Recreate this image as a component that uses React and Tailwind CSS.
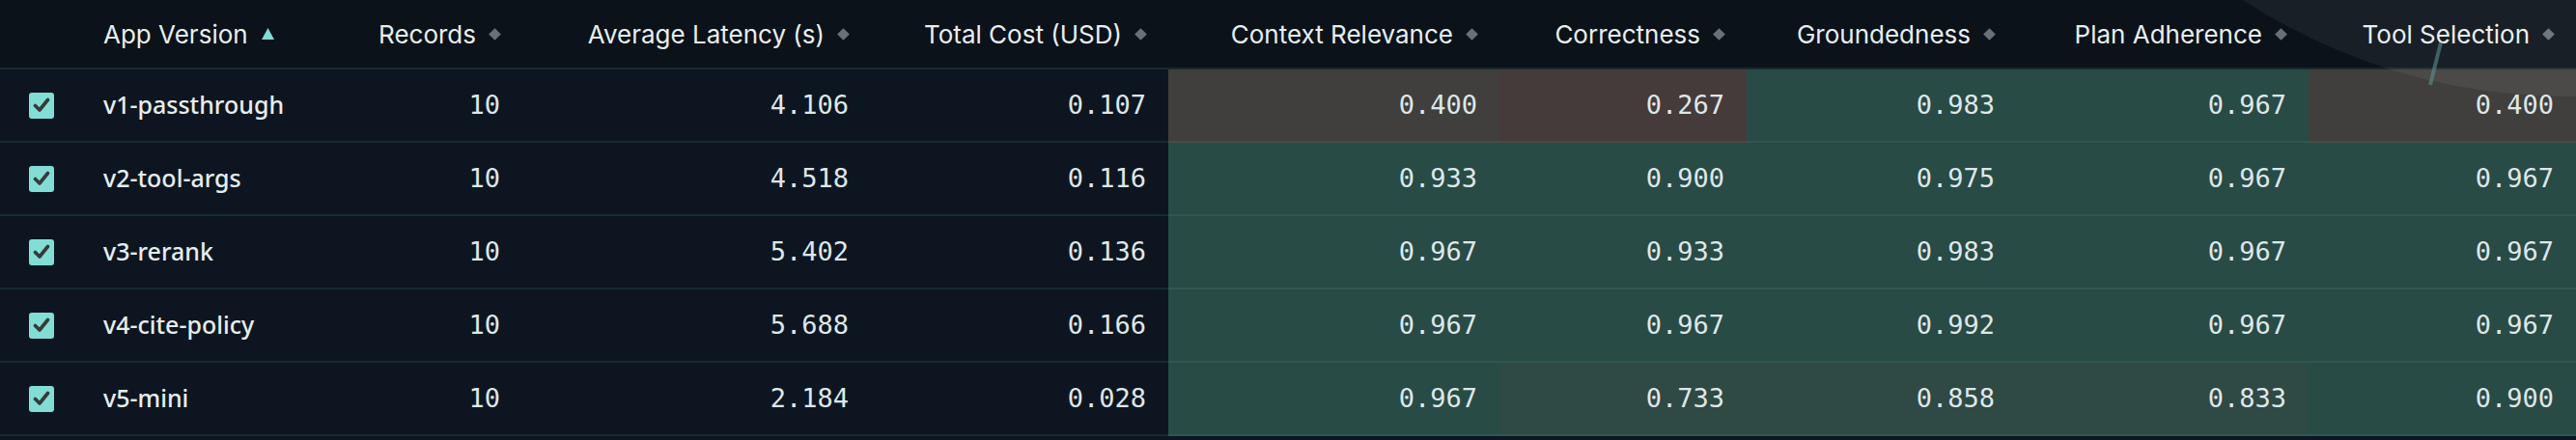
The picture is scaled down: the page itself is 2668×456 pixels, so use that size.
import React from 'react';

const rows = [
  { name: 'v1-passthrough', records: 10, latency: '4.106', cost: '0.107', scores: [0.4, 0.267, 0.983, 0.967, 0.4] },
  { name: 'v2-tool-args', records: 10, latency: '4.518', cost: '0.116', scores: [0.933, 0.9, 0.975, 0.967, 0.967] },
  { name: 'v3-rerank', records: 10, latency: '5.402', cost: '0.136', scores: [0.967, 0.933, 0.983, 0.967, 0.967] },
  { name: 'v4-cite-policy', records: 10, latency: '5.688', cost: '0.166', scores: [0.967, 0.967, 0.992, 0.967, 0.967] },
  { name: 'v5-mini', records: 10, latency: '2.184', cost: '0.028', scores: [0.967, 0.733, 0.858, 0.833, 0.9] },
];

const headers = [
  'Records',
  'Average Latency (s)',
  'Total Cost (USD)',
  'Context Relevance',
  'Correctness',
  'Groundedness',
  'Plan Adherence',
  'Tool Selection',
];

function scoreBg(v) {
  if (v >= 0.9) return 'bg-[#284b45]';
  if (v >= 0.7) return 'bg-[#2f4944]';
  if (v >= 0.35) return 'bg-[#403f3d]';
  return 'bg-[#463b3b]';
}

const cellBase = 'h-[76px] border-b-2 border-[#64b4aa1f] flex items-center';
const numCell = `${cellBase} justify-end pr-[23px] font-['DejaVu_Sans_Mono',monospace] text-[27px] text-[#dfe7e9]`;

function Diamond() {
  return <span className="ml-[15px] inline-block w-[9px] h-[9px] rotate-45 bg-[#6a7077]" />;
}

function Checkbox() {
  return (
    <div className="w-[26px] h-[27px] rounded-[3px] bg-[#82ddd5] flex items-center justify-center">
      <svg width="18" height="16" viewBox="0 0 18 16">
        <path d="M2.5 8.5 L7 13 L15.5 2.5" fill="none" stroke="#363a3a" strokeWidth="3.6" strokeLinecap="round" strokeLinejoin="round" />
      </svg>
    </div>
  );
}

export default function App() {
  return (
    <div className="relative overflow-hidden w-[2668px] h-[456px] bg-[#0d1620]">
      <div className="grid grid-cols-[86px_302px_153px_361px_308px_343px_256px_280px_302px_277px]">
        <div className="h-[72px] border-b-2 border-[#64b4aa26] bg-[#0b1219]" />
        <div className="h-[72px] border-b-2 border-[#64b4aa26] bg-[#0b1219] flex items-center pl-[21px] font-['Inter',sans-serif] text-[26px] text-[#e8eef0]">
          App Version
          <svg className="ml-[14px]" width="13" height="12" viewBox="0 0 13 12">
            <path d="M6.5 0 L13 12 L0 12 Z" fill="#7fdcd4" />
          </svg>
        </div>
        {headers.map(h => (
          <div
            key={h}
            className="h-[72px] border-b-2 border-[#64b4aa26] bg-[#0b1219] flex items-center justify-end pr-[24px] font-['Inter',sans-serif] text-[26px] text-[#e8eef0] whitespace-nowrap"
          >
            {h}
            <Diamond />
          </div>
        ))}

        {rows.map(r => (
          <React.Fragment key={r.name}>
            <div className={`${cellBase} justify-center`}>
              <Checkbox />
            </div>
            <div className={`${cellBase} pl-[21px] font-['Noto_Sans',sans-serif] font-medium text-[25px] text-[#e6edef]`}>
              {r.name}
            </div>
            <div className={numCell}>{r.records}</div>
            <div className={numCell}>{r.latency}</div>
            <div className={numCell}>{r.cost}</div>
            {r.scores.map((s, i) => (
              <div key={i} className={`${numCell} ${scoreBg(s)}`}>
                {s.toFixed(3)}
              </div>
            ))}
          </React.Fragment>
        ))}
      </div>

      <div className="pointer-events-none absolute right-[-610px] top-[-1136px] w-[1236px] h-[1236px] rounded-full bg-white/[0.06]" />
      <svg className="pointer-events-none absolute left-[2510px] top-[40px]" width="26" height="54" viewBox="0 0 26 54">
        <line x1="18" y1="4" x2="7" y2="48" stroke="#5f9898" strokeOpacity="0.55" strokeWidth="4" />
      </svg>
    </div>
  );
}
